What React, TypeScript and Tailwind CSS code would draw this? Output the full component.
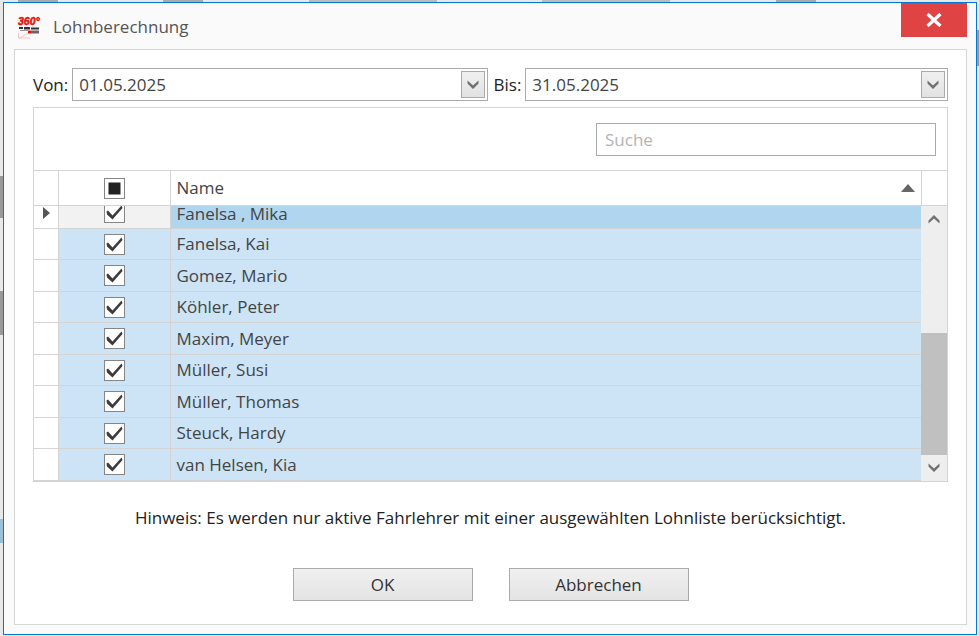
import { useEffect, useRef, useState } from "react";

interface Instructor {
  name: string;
  checked: boolean;
}

const initialInstructors: Instructor[] = [
  { name: "Fanelsa , Mika", checked: true },
  { name: "Fanelsa, Kai", checked: true },
  { name: "Gomez, Mario", checked: true },
  { name: "Köhler, Peter", checked: true },
  { name: "Maxim, Meyer", checked: true },
  { name: "Müller, Susi", checked: true },
  { name: "Müller, Thomas", checked: true },
  { name: "Steuck, Hardy", checked: true },
  { name: "van Helsen, Kia", checked: true },
];

function Logo() {
  return (
    <svg className="size-6" viewBox="0 0 24 24" aria-hidden="true">
      <rect width="24" height="24" fill="#fdf8f8" />
      <text x="1" y="10" fontFamily="Liberation Sans" fontSize="10.5" fontWeight="bold" fontStyle="italic" fill="#e01010" stroke="#e01010" strokeWidth="0.5">
        360°
      </text>
      <path d="M2 12h4v2H2zM7 12h6v2.500H7zM14 12.500h8v2h-8z" fill="#333" />
      <path d="M3 15h8v1H3z" fill="#999" />
      <path d="M14 15.500h8v3h-8z" fill="#666" />
      <path d="M11 15.500h3v3h-3z" fill="#e01010" />
      <path d="M2 23c5-1 5-4 9-4M1.500 18v5h12" fill="none" stroke="#f5c4c4" />
    </svg>
  );
}

function Chevron({ up = false }: { up?: boolean }) {
  return (
    <svg className="h-3 w-3" viewBox="0 0 12 12" aria-hidden="true">
      <path
        d={up ? "M0.5 7.5L6 2l5.5 5.5v3L6 5.5l-5.5 5z" : "M0.5 4.5L6 10l5.5-5.5v-3L6 6.5l-5.5-5z"}
        fill="#707070"
      />
    </svg>
  );
}

function DateField({ id, label, value }: { id: string; label: string; value: string }) {
  const [date, setDate] = useState(value);

  return (
    <div className="flex flex-1 items-center gap-1">
      <label htmlFor={id} className="text-[#222]">{label}</label>
      <div className="flex h-[33px] flex-1 border border-[#ababab] p-0.5">
        <input
          type="text"
          id={id}
          className="w-0 flex-1 px-1 text-[#444] outline-none"
          value={date}
          onChange={(e) => setDate(e.target.value)}
        />
        <button
          type="button"
          aria-label="Kalender öffnen"
          className="flex w-6 items-center justify-center border border-[#aaa] bg-linear-to-b from-[#f0f0f0] to-[#e2e2e2]"
        >
          <Chevron />
        </button>
      </div>
    </div>
  );
}

interface CheckboxProps {
  label: string;
  checked: boolean;
  indeterminate?: boolean;
  onChange: () => void;
}

function Checkbox({ label, checked, indeterminate = false, onChange }: CheckboxProps) {
  const ref = useRef<HTMLInputElement>(null);

  useEffect(() => {
    if (ref.current) ref.current.indeterminate = indeterminate;
  }, [indeterminate]);

  return (
    <span className="relative size-[21px] shrink-0">
      <input
        ref={ref}
        type="checkbox"
        aria-label={label}
        checked={checked}
        onChange={onChange}
        className="block size-full appearance-none border border-[#858585] bg-white"
      />
      <svg className="pointer-events-none absolute inset-0 size-full" viewBox="0 0 21 21" aria-hidden="true">
        {indeterminate && <path d="M4.500 4.500h12v12h-12z" fill="#222" />}
        {checked && !indeterminate && (
          <path d="M2.500 9.500l1.500-1 4.500 5L17.500 3.500l1 2.500L8.500 17.500l-5.500-5z" fill="#3c3c3c" />
        )}
      </svg>
    </span>
  );
}

function App() {
  const [instructors, setInstructors] = useState(initialInstructors);
  const [search, setSearch] = useState("");

  const toggle = (name: string) => {
    setInstructors(instructors.map((i) => (i.name === name ? { ...i, checked: !i.checked } : i)));
  };

  const toggleAll = () => {
    const all = instructors.every((i) => i.checked);
    setInstructors(instructors.map((i) => ({ ...i, checked: !all })));
  };

  const visible = instructors.filter((i) => i.name.toLowerCase().includes(search.toLowerCase()));

  return (
    <div className="flex min-h-screen flex-col bg-[#e6e8ea] pb-px font-['Open_Sans',sans-serif] text-[17px] leading-6">
      {/* Slivers of the window behind the dialog */}
      <div className="flex h-0.5 justify-between px-[18px]">
        <div className="w-10 bg-[#aaa]" />
        <div className="w-10 bg-[#aaa]" />
        <div className="w-32 bg-[#bbb]" />
        <div className="w-32 bg-[#bbb]" />
        <div className="w-10 bg-[#aaa]" />
        <div className="w-10 bg-[#e6e8ea]" />
      </div>

      <div className="flex flex-1">
        <div className="flex w-[3px] flex-col">
          <div className="h-[174px]" />
          <div className="h-[42px] bg-[#999]" />
          <div className="h-[73px]" />
          <div className="h-11 bg-[#999]" />
          <div className="h-[184px]" />
          <div className="h-6 bg-[#9bbfd8]" />
        </div>

        <div role="dialog" aria-labelledby="title" className="flex flex-1 flex-col border border-[#0078d0] bg-[#fafafa] pr-[9px] pb-[9px] pl-2.5">
          {/* Title bar */}
          <div className="flex h-[46px] items-start">
            <div className="flex flex-1 items-center gap-3 pt-3 pl-[3px]">
              <Logo />
              <h1 id="title" className="text-[#555]">Lohnberechnung</h1>
            </div>
            <button type="button" aria-label="Schließen" className="flex h-[34px] w-[66px] items-center justify-center bg-[#e04343]">
              <svg className="size-4" viewBox="0 0 16 16" aria-hidden="true">
                <path d="M1.500 2l13 12M14.500 2l-13 12" stroke="#fff" strokeWidth="3.200" />
              </svg>
            </button>
          </div>

          <div className="flex flex-1 flex-col border border-[#d6d6d6] bg-white px-[18px] pt-[18px]">
            <div className="flex gap-1.5">
              <DateField id="von" label="Von:" value="01.05.2025" />
              <DateField id="bis" label="Bis:" value="31.05.2025" />
            </div>

            <div className="mt-1.5 border border-[#d4d4d4]">
              <div className="flex h-[62px] justify-end pt-[15px] pr-[11px]">
                <input
                  type="search"
                  aria-label="Suche"
                  placeholder="Suche"
                  className="h-[33px] w-[340px] border border-[#ababab] px-2 text-[#444] outline-none placeholder:text-[#b4b4b4]"
                  value={search}
                  onChange={(e) => setSearch(e.target.value)}
                />
              </div>

              <div className="flex">
                <table className="w-full flex-1 table-fixed border-collapse text-left">
                  <colgroup>
                    <col className="w-6" />
                    <col className="w-28" />
                    <col />
                  </colgroup>
                  <thead>
                    <tr className="h-[35px] border-y border-[#d4d4d4]">
                      <th className="border-r border-[#d4d4d4]" />
                      <th className="border-r border-[#d4d4d4]">
                        <div className="flex justify-center">
                          <Checkbox label="Alle auswählen" checked={false} indeterminate onChange={toggleAll} />
                        </div>
                      </th>
                      <th className="px-1.5 font-normal text-[#444]">
                        <div className="flex items-center justify-between">
                          Name
                          <svg className="h-2 w-3.5" viewBox="0 0 14 8" aria-hidden="true">
                            <path d="M7 0l7 8H0z" fill="#666" />
                          </svg>
                        </div>
                      </th>
                    </tr>
                  </thead>
                  <tbody>
                    {visible.map((instructor, index) => {
                      const current = index === 0;
                      return (
                        <tr
                          key={instructor.name}
                          className={current ? "border-b border-[#d4d4d4]" : "border-b border-[#d4d4d4] bg-[#cce4f6] odd:h-8 even:h-[31px]"}
                        >
                          <td className="border-r border-[#d4d4d4] bg-white">
                            {current && (
                              <svg className="mx-auto mb-2 h-3 w-2" viewBox="0 0 8 12" aria-hidden="true">
                                <path d="M1 0l7 6-7 6z" fill="#555" />
                              </svg>
                            )}
                          </td>
                          <td className={current ? "border-r border-[#d4d4d4] bg-[#f2f2f2]" : "border-r border-[#d4d4d4]"}>
                            <div
                              className={
                                current
                                  ? "flex h-[22px] items-end justify-center overflow-hidden pb-[5px]"
                                  : "flex justify-center"
                              }
                            >
                              <Checkbox
                                label={instructor.name}
                                checked={instructor.checked}
                                onChange={() => toggle(instructor.name)}
                              />
                            </div>
                          </td>
                          <td className={current ? "bg-[#b0d5ef] px-1.5 text-[#444]" : "px-1.5 text-[#444]"}>
                            <div className={current ? "flex h-[22px] items-end pb-1.5 leading-4" : "flex items-center"}>
                              {instructor.name}
                            </div>
                          </td>
                        </tr>
                      );
                    })}
                  </tbody>
                </table>

                {/* Scrollbar */}
                <div className="flex w-[26px] flex-col">
                  <div className="h-9 border-y border-l border-[#d4d4d4]" />
                  <div className="flex flex-1 flex-col items-center bg-[#eee]">
                    <button type="button" aria-label="Nach oben" className="flex h-[26px] w-full items-center justify-center">
                      <Chevron up />
                    </button>
                    <div className="flex-1" />
                    <div className="h-[122px] w-full bg-[#c0c0c0]" />
                    <button type="button" aria-label="Nach unten" className="flex h-[26px] w-full items-center justify-center">
                      <Chevron />
                    </button>
                  </div>
                </div>
              </div>
            </div>

            <p className="mt-6 text-center text-[#222]">
              Hinweis: Es werden nur aktive Fahrlehrer mit einer ausgewählten Lohnliste berücksichtigt.
            </p>

            <div className="mt-[38px] flex justify-center gap-9 text-[#333]">
              <button type="button" className="h-[33px] w-[180px] border border-[#ababab] bg-linear-to-b from-[#f0f0f0] to-[#e4e4e4]">
                OK
              </button>
              <button type="button" className="h-[33px] w-[180px] border border-[#ababab] bg-linear-to-b from-[#f0f0f0] to-[#e4e4e4]">
                Abbrechen
              </button>
            </div>
          </div>
        </div>

        <div className="flex w-0.5 flex-col">
          <div className="h-7" />
          <div className="h-9 bg-[#999]" />
        </div>
      </div>
    </div>
  );
}

export default App;
